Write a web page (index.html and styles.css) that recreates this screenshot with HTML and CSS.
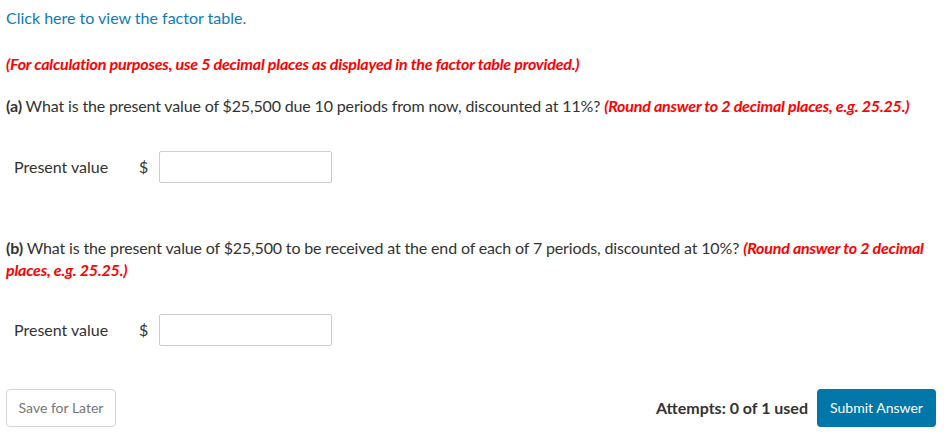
FILE: index.html
```html
<!DOCTYPE html>
<html lang="en">
<head>
  <meta charset="UTF-8" />
  <meta name="viewport" content="width=device-width, initial-scale=1.0" />
  <title>Present Value Question</title>
  <link rel="stylesheet" href="styles.css">
</head>
<body>
  <div class="question">
    <p class="factor-link"><a href="#">Click here to view the factor table.</a></p>

    <p class="note">(For calculation purposes, use 5 decimal places as displayed in the factor table provided.)</p>

    <div class="part">
      <p class="prompt"><b>(a)</b> What is the present value of $25,500 due 10 periods from now, discounted at 11%? <span class="note">(Round answer to 2 decimal places, e.g. 25.25.)</span></p>
      <div class="answer-row">
        <label for="pvA">Present value</label>
        <span class="currency">$</span>
        <input type="text" id="pvA" />
      </div>
    </div>

    <div class="part">
      <p class="prompt"><b>(b)</b> What is the present value of $25,500 to be received at the end of each of 7 periods, discounted at 10%? <span class="note">(Round answer to 2 decimal places, e.g. 25.25.)</span></p>
      <div class="answer-row">
        <label for="pvB">Present value</label>
        <span class="currency">$</span>
        <input type="text" id="pvB" />
      </div>
    </div>
  </div>

  <div class="actions">
    <button class="btn-save">Save for Later</button>
    <div class="submit-group">
      <span class="attempts">Attempts: 0 of 1 used</span>
      <button class="btn-submit">Submit Answer</button>
    </div>
  </div>
</body>
</html>
```

FILE: styles.css
```css
:root {
  --link-blue: #0e7bbd;
  --submit-blue: #0176a8;
  --text: #333333;
  --red: #ff0000;
}
* {
  box-sizing: border-box;
  margin: 0;
  padding: 0;
}
body {
  font-family: Lato, "Open Sans", sans-serif;
  font-size: 16px;
  line-height: 22px;
  color: var(--text);
  background: #fff;
  padding: 7px 6px 0 6px;
}
.factor-link a {
  color: var(--link-blue);
  text-decoration: none;
}
.note {
  color: var(--red);
  font-weight: bold;
  font-style: italic;
  letter-spacing: -0.2px;
}
.question > .note {
  margin-top: 24px;
}
.part {
  margin-top: 20px;
}
.part + .part {
  margin-top: 54px;
}
.prompt {
  letter-spacing: -0.15px;
}
.prompt b {
  font-weight: bold;
}
.answer-row {
  display: flex;
  align-items: center;
  margin-top: 34px;
  padding-left: 8px;
}
.answer-row label {
  width: 125px;
}
.currency {
  width: 20px;
}
.answer-row input {
  width: 173px;
  height: 32px;
  border: 1px solid #cccccc;
  border-radius: 2px;
  font: inherit;
  padding: 0 6px;
}
.part + .part .answer-row {
  margin-top: 33px;
}
.actions {
  display: flex;
  justify-content: space-between;
  align-items: center;
  margin-top: 43px;
  padding-right: 8px;
}
.btn-save {
  background: #fff;
  color: #777;
  border: 1px solid #d6d6d6;
  border-radius: 4px;
  font: inherit;
  font-size: 14px;
  height: 38px;
  width: 110px;
  cursor: pointer;
}
.submit-group {
  display: flex;
  align-items: center;
  gap: 9px;
}
.attempts {
  font-weight: bold;
}
.btn-submit {
  background: var(--submit-blue);
  color: #fff;
  border: none;
  border-radius: 4px;
  font: inherit;
  font-size: 14px;
  height: 38px;
  width: 119px;
  cursor: pointer;
}
```
